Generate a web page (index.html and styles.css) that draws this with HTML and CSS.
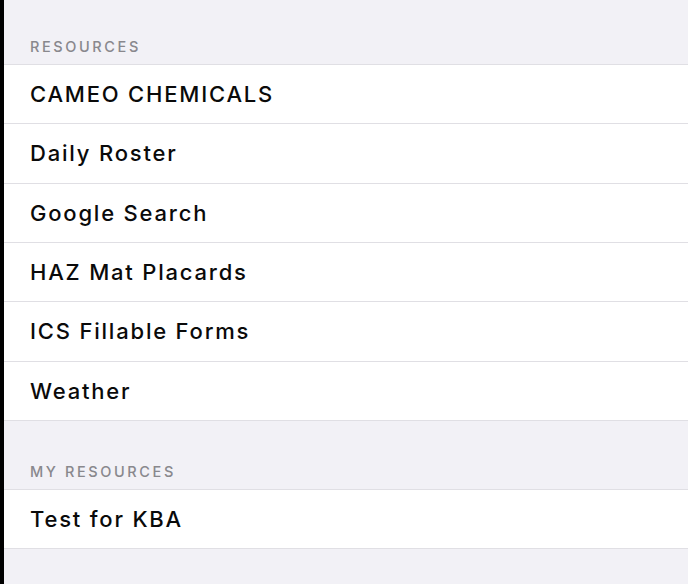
FILE: index.html
```html
<!DOCTYPE html>
<html lang="en">
<head>
    <meta charset="UTF-8">
    <meta name="viewport" content="width=device-width, initial-scale=1.0">
    <title>Resources</title>
    <link rel="stylesheet" href="styles.css">
</head>
<body>
    <div id="screen">
        <div class="section-title first">RESOURCES</div>
        <ul class="group">
            <li><a href="#">CAMEO CHEMICALS</a></li>
            <li><a href="#">Daily Roster</a></li>
            <li><a href="#">Google Search</a></li>
            <li><a href="#">HAZ Mat Placards</a></li>
            <li><a href="#">ICS Fillable Forms</a></li>
            <li><a href="#">Weather</a></li>
        </ul>
        <div class="section-title">MY RESOURCES</div>
        <ul class="group">
            <li><a href="#">Test for KBA</a></li>
        </ul>
    </div>
</body>
</html>
```

FILE: styles.css
```css
*{padding: 0;margin: 0;box-sizing: border-box;}
html,body{height: 100%;}
body{background: #000;font-family: Inter, "Liberation Sans", sans-serif;}
#screen{height: 100%;margin-left: 4px;background: #f2f1f6;overflow: hidden;}

.section-title{padding: 42px 26px 8px;font-size: 14.5px;font-weight: 500;line-height: 18px;letter-spacing: 2.6px;color: #89888d;}
.section-title.first{padding-top: 38px;}

.group{list-style: none;background: #fff;border-top: 1px solid #e0dfe4;}
.group li{height: 59.33px;border-bottom: 1px solid #e0dfe4;display: flex;align-items: center;padding-left: 26px;}
.group a{color: #0a0a0a;text-decoration: none;font-size: 22px;font-weight: 500;letter-spacing: 1.8px;}
```
